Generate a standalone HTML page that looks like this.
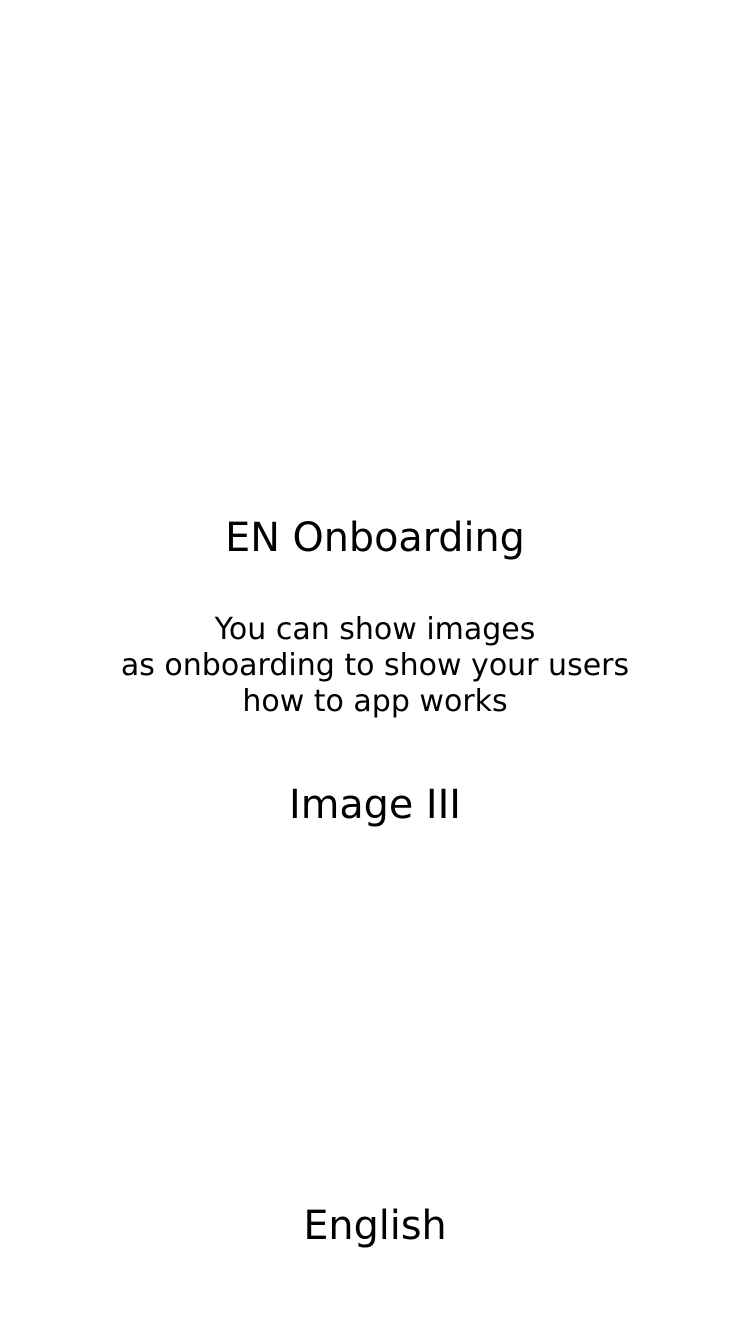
<!DOCTYPE html>
<html><head><meta charset="utf-8"><style>
html,body{margin:0;padding:0;background:#fff;width:750px;height:1334px;overflow:hidden}
body{position:relative;font-family:"DejaVu Sans","Liberation Sans",sans-serif;color:#000}
.t{position:absolute;left:0;width:750px;text-align:center;white-space:nowrap}
.big{font-size:39.7px;line-height:40px}
.body{font-size:30px;line-height:36px}
</style></head><body>
<div class="t big" style="top:518px">EN Onboarding</div>
<div class="t body" style="top:612px">You can show images<br>as onboarding to show your users<br>how to app works</div>
<div class="t big" style="top:785px">Image III</div>
<div class="t big" style="top:1206px">English</div>
</body></html>
